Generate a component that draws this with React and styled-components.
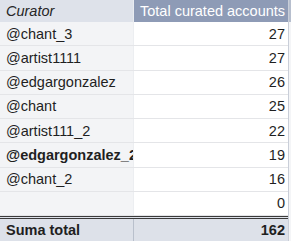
import React from 'react';
import styled, { createGlobalStyle } from 'styled-components';

const GlobalStyle = createGlobalStyle`
  html, body {
    margin: 0;
    padding: 0;
    background: #ffffff;
  }
  body {
    font-family: "Liberation Sans", Arial, sans-serif;
  }
`;

const ROWS = [
  { curator: '@chant_3', count: 27 },
  { curator: '@artist1111', count: 27 },
  { curator: '@edgargonzalez', count: 26 },
  { curator: '@chant', count: 25 },
  { curator: '@artist111_2', count: 22 },
  { curator: '@edgargonzalez_2', count: 19, bold: true },
  { curator: '@chant_2', count: 16 },
  { curator: '', count: 0 },
];

const App = () => {
  const total = ROWS.reduce((sum, r) => sum + r.count, 0);

  return (
    <>
      <GlobalStyle />
      <Sheet>
        <Pivot>
          <HeadRow>
            <HeadLabel>Curator</HeadLabel>
            <HeadValue>Total curated accounts</HeadValue>
          </HeadRow>
          {ROWS.map((row, i) => (
            <Row key={i}>
              <Label $bold={row.bold}>{row.curator}</Label>
              <Value>{row.count}</Value>
            </Row>
          ))}
          <TotalRow>
            <TotalLabel>Suma total</TotalLabel>
            <TotalValue>{total}</TotalValue>
          </TotalRow>
        </Pivot>
        <Gutter />
      </Sheet>
    </>
  );
};

export default App;

const Sheet = styled.div`
  display: flex;
  width: 291px;
  height: 241px;
  overflow: hidden;
`;

const Pivot = styled.div`
  width: 288px;
  display: flex;
  flex-direction: column;
  border-right: 1px solid #c9ced8;
  font-size: 14.5px;
  color: #1f1f1f;
`;

const Gutter = styled.div`
  flex: 1;
  background: linear-gradient(to bottom, #b7bfce 0 22px, #f4f5f7 22px);
`;

const Row = styled.div`
  display: grid;
  grid-template-columns: 134px 1fr;
  height: 24.25px;
  border-bottom: 1px solid #e4e5e8;
  box-sizing: border-box;
`;

const HeadRow = styled(Row)`
  height: 22px;
  border-bottom: none;
`;

const Cell = styled.div`
  display: flex;
  align-items: center;
  padding: 0 4px 0 6px;
  white-space: nowrap;
  overflow: hidden;
`;

const HeadLabel = styled(Cell)`
  background: #dee2ea;
  font-style: italic;
  color: #262626;
  border-right: 1px solid #e9ecf1;
`;

const HeadValue = styled(Cell)`
  background: #8e9bb6;
  color: #ffffff;
  padding-left: 6px;
`;

const Label = styled(Cell)`
  background: #f3f4f6;
  font-weight: ${(p) => (p.$bold ? 700 : 400)};
  border-right: 1px solid #eceef1;
`;

const Value = styled(Cell)`
  justify-content: flex-end;
  padding-right: 3px;
`;

const TotalRow = styled(Row)`
  flex: 1;
  height: auto;
  border-top: 3px double #3a3a3a;
  border-bottom: none;
  background: #dde1e9;
  font-weight: 700;
`;

const TotalLabel = styled(Cell)`
  border-right: 1px solid #b9c0cc;
`;

const TotalValue = styled(Cell)`
  justify-content: flex-end;
  padding-right: 3px;
`;
